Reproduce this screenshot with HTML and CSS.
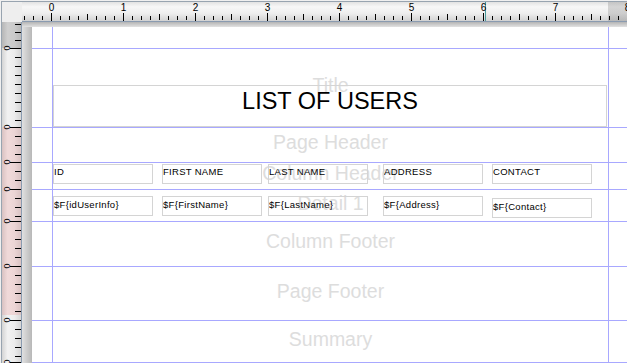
FILE: index.html
```html
<!DOCTYPE html>
<html>
<head>
<meta charset="utf-8">
<link rel="stylesheet" href="styles.css">
</head>
<body>
<div class="app">
  <div class="corner"></div>
  <div class="hruler">
    <svg width="605" height="19" viewBox="0 0 605 19">
      <defs>
        <pattern id="ticks" x="29" y="0" width="72" height="19" patternUnits="userSpaceOnUse">
          <rect x="0" y="11" width="1" height="8" fill="#000"/>
          <rect x="9" y="14" width="1" height="4" fill="#000"/>
          <rect x="18" y="14" width="1" height="4" fill="#000"/>
          <rect x="27" y="14" width="1" height="4" fill="#000"/>
          <rect x="36" y="12" width="1" height="6" fill="#000"/>
          <rect x="45" y="14" width="1" height="4" fill="#000"/>
          <rect x="54" y="14" width="1" height="4" fill="#000"/>
          <rect x="63" y="14" width="1" height="4" fill="#000"/>
        </pattern>
      </defs>
      <rect x="0" y="0" width="605" height="19" fill="url(#ticks)"/>
      <rect x="463" y="0" width="1" height="19" fill="#4a9a9a"/>
      <g class="rnum">
        <text x="29.5" y="9">0</text>
        <text x="101.5" y="9">1</text>
        <text x="173.5" y="9">2</text>
        <text x="245.5" y="9">3</text>
        <text x="317.5" y="9">4</text>
        <text x="389.5" y="9">5</text>
        <text x="461.5" y="9">6</text>
        <text x="533.5" y="9">7</text>
        <text x="605.5" y="9">8</text>
      </g>
    </svg>
  </div>
  <div class="vruler">
    <div class="vr-top"></div>
    <div class="vb h-title"></div>
    <div class="vb h-ph pink"></div>
    <div class="vb h-ch pink"></div>
    <div class="vb h-det pink"></div>
    <div class="vb h-cf pink"></div>
    <div class="vb h-pf pink-part"></div>
    <div class="vb h-sum"></div>
    <div class="vb h-tail"></div>
  </div>
  <div class="canvas">
    <div class="page">
      <div class="band b-margin"></div>
      <div class="band b-title">
        <span class="label">Title</span>
        <div class="elems">
          <div class="title-box">LIST OF USERS</div>
        </div>
      </div>
      <div class="band b-ph">
        <span class="label">Page Header</span>
      </div>
      <div class="band b-ch">
        <span class="label">Column Header</span>
        <div class="elems row-ch">
          <div class="fbox">ID</div>
          <div class="fbox g9">FIRST NAME</div>
          <div class="fbox g6">LAST NAME</div>
          <div class="fbox g15">ADDRESS</div>
          <div class="fbox g9">CONTACT</div>
        </div>
      </div>
      <div class="band b-det">
        <span class="label">Detail 1</span>
        <div class="elems row-det">
          <div class="fbox">$F{idUserInfo}</div>
          <div class="fbox g9">$F{FirstName}</div>
          <div class="fbox g6">$F{LastName}</div>
          <div class="fbox g15">$F{Address}</div>
          <div class="fbox g9 low">$F{Contact}</div>
        </div>
      </div>
      <div class="band b-cf">
        <span class="label">Column Footer</span>
      </div>
      <div class="band b-pf">
        <span class="label">Page Footer</span>
      </div>
      <div class="band b-sum">
        <span class="label">Summary</span>
      </div>
    </div>
  </div>
</div>
</body>
</html>
```

FILE: styles.css
```css
* {
  box-sizing: border-box;
  margin: 0;
  padding: 0;
}

html, body {
  width: 627px;
  height: 363px;
  overflow: hidden;
  background: #f0f0f0;
}

body {
  font-family: "Liberation Sans", Arial, sans-serif;
}

.app {
  display: grid;
  grid-template-columns: 21px 605px;
  grid-template-rows: 21px 341px;
  padding: 1px 0 0 1px;
  width: 627px;
  height: 363px;
  overflow: hidden;
}

.corner {
  background: #eeeeee;
  border-top: 1px solid #98a4b0;
  border-left: 1px solid #98a4b0;
}

.hruler {
  border-top: 1px solid #98a4b0;
  border-bottom: 1px solid #8a9bb0;
  background:
    linear-gradient(to right, transparent 586px, rgba(90, 90, 90, 0.22) 586px),
    linear-gradient(to bottom, #e2e2e2 0, #f7f7f7 25%, #ededed 60%, #d2d2d2 100%);
}

.hruler svg {
  display: block;
}

.rnum text {
  font-family: "Liberation Sans", Arial, sans-serif;
  font-size: 10px;
  fill: #000;
  text-anchor: middle;
}

.vruler {
  display: flex;
  flex-direction: column;
  border-left: 1px solid #98a4b0;
  border-right: 1px solid #8a9bb0;
  background: linear-gradient(to right, #d4d4d4 0, #f2f2f2 30%, #ececec 65%, #d6d6d6 100%);
  overflow: hidden;
}

.vr-top {
  height: 26px;
  flex: none;
  background:
    repeating-linear-gradient(to top, transparent 0 7px, #000 7px 8px) 13px 0 / 6px 100% no-repeat,
    rgba(80, 80, 80, 0.22);
}

.vb {
  position: relative;
  flex: none;
  background: repeating-linear-gradient(to bottom, #000 0 1px, transparent 1px 9px) 13px 0 / 6px 100% no-repeat;
}

.vb::before {
  content: "";
  position: absolute;
  left: 8px;
  top: 0;
  width: 11px;
  height: 1px;
  background: #000;
}

.vb::after {
  content: "0";
  position: absolute;
  left: 2px;
  top: -5px;
  font-size: 9px;
  line-height: 10px;
  color: #000;
  transform: rotate(-90deg);
}

.vb.pink {
  background:
    repeating-linear-gradient(to bottom, #000 0 1px, transparent 1px 9px) 13px 0 / 6px 100% no-repeat,
    rgba(236, 120, 120, 0.2);
}

.vb.pink-part {
  background:
    repeating-linear-gradient(to bottom, #000 0 1px, transparent 1px 9px) 13px 0 / 6px 100% no-repeat,
    linear-gradient(to bottom, rgba(236, 120, 120, 0.2) 0 49px, transparent 49px);
}

.h-title { height: 79px; }
.h-ph { height: 35px; }
.h-ch { height: 27px; }
.h-det { height: 32px; }
.h-cf { height: 45px; }
.h-pf { height: 54px; }
.h-sum { height: 42px; }
.h-tail { height: 20px; }

.canvas {
  padding: 5px 0 0 10px;
  background:
    linear-gradient(to bottom, #b4b4b4, #e2e2e2) 0 0 / 100% 5px no-repeat,
    linear-gradient(to right, #e0e0e0, #b8b8b8) 0 0 / 10px 100% no-repeat,
    #ffffff;
  overflow: hidden;
}

.page {
  width: 597px;
  background:
    linear-gradient(#a8a8ff, #a8a8ff) 20px 0 / 1px 100% no-repeat,
    linear-gradient(#a8a8ff, #a8a8ff) 576px 0 / 1px 100% no-repeat,
    #ffffff;
}

.band {
  display: grid;
  padding: 0 21px;
  border-bottom: 1px solid #a8a8ff;
}

.band > * {
  grid-area: 1 / 1;
}

.b-margin { height: 22px; }
.b-title { height: 79px; }
.b-ph { height: 35px; }
.b-ch { height: 27px; }
.b-det { height: 32px; }
.b-cf { height: 45px; }
.b-pf { height: 54px; }
.b-sum { height: 42px; }

.label {
  justify-self: center;
  align-self: center;
  padding-bottom: 6px;
  font-size: 19.5px;
  line-height: 20px;
  color: #dddddd;
  white-space: nowrap;
}

.elems {
  display: flex;
  align-items: flex-start;
  align-self: start;
}

.title-box {
  margin-top: 36px;
  width: 554px;
  height: 42px;
  border: 1px solid #d4d4d4;
  padding-top: 2px;
  text-align: center;
  font-size: 23.5px;
  line-height: 27px;
  color: #000;
}

.row-ch {
  margin-top: 1px;
}

.row-det {
  margin-top: 6px;
}

.fbox {
  width: 100px;
  height: 20px;
  border: 1px solid #d4d4d4;
  padding-top: 2px;
  font-size: 9.5px;
  letter-spacing: 0.3px;
  line-height: 11px;
  color: #000;
  white-space: nowrap;
  overflow: hidden;
}

.row-ch .fbox {
  padding-top: 1px;
}

.g6 { margin-left: 6px; }
.g9 { margin-left: 9px; }
.g15 { margin-left: 15px; }

.low {
  margin-top: 2px;
}
```
